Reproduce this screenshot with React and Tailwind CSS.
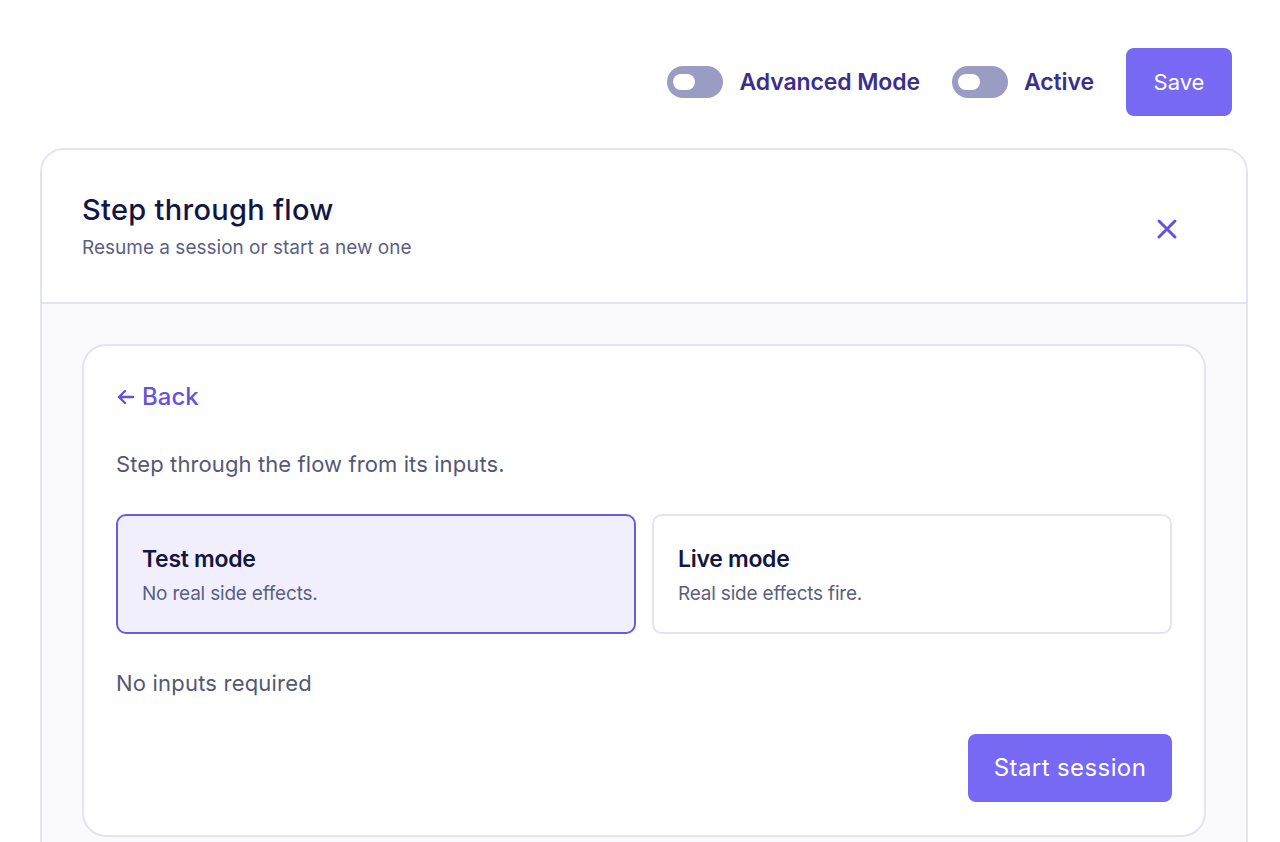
import React from "react";

function Toggle() {
  return (
    <div className="w-[56px] h-[32px] rounded-full bg-[#9a9cc4] flex items-center pl-[6px]">
      <div className="w-[22px] h-[16px] rounded-full bg-white" />
    </div>
  );
}

export default function App() {
  return (
    <div className="min-h-[842px] bg-white overflow-hidden" style={{ fontFamily: "Inter, 'Noto Sans', sans-serif" }}>
      <div className="flex justify-end items-center pt-[48px] pr-[48px] gap-[32px]">
        <div className="flex items-center gap-[16px]">
          <Toggle />
          <span className="text-[23px] font-semibold text-[#3a2f8c] tracking-[-0.1px]">Advanced Mode</span>
        </div>
        <div className="flex items-center gap-[16px]">
          <Toggle />
          <span className="text-[23px] font-semibold text-[#3a2f8c] tracking-[-0.1px]">Active</span>
        </div>
        <button className="w-[106px] h-[68px] rounded-[8px] bg-[#7769f3] text-white text-[22px]">Save</button>
      </div>
      <div className="ml-[40px] mr-[32px] mt-[32px] border-2 border-[#e3e4f3] rounded-t-[24px] bg-[#fafafd] h-[720px]">
        <div className="bg-white rounded-t-[22px] border-b-2 border-[#e3e4f3] h-[154px] flex items-center justify-between pl-[40px] pr-[68px]">
          <div className="pb-[2px]">
            <div className="text-[29px] font-medium text-[#131544] tracking-[0.3px]">Step through flow</div>
            <div className="text-[19px] text-[#5a5f85] mt-[2px]">Resume a session or start a new one</div>
          </div>
          <svg width="22" height="22" viewBox="0 0 22 22" className="mt-[6px]">
            <path d="M3 3 L19 19 M19 3 L3 19" stroke="#6650e0" strokeWidth="3" strokeLinecap="round" />
          </svg>
        </div>
        <div className="px-[40px] pt-[40px]">
          <div className="bg-white border-2 border-[#e3e4f3] rounded-[24px] px-[32px] pt-[33px] pb-[33px]">
            <div className="flex items-center gap-[6px] text-[#6553e0] text-[24px] font-medium">
              <svg width="20" height="20" viewBox="0 0 20 20">
                <path d="M17 10 H3 M9 4 L3 10 L9 16" stroke="#6553e0" strokeWidth="2.4" fill="none" strokeLinecap="round" strokeLinejoin="round" />
              </svg>
              <span>Back</span>
            </div>
            <div className="mt-[33px] text-[22px] text-[#535876] tracking-[0.1px]">Step through the flow from its inputs.</div>
            <div className="mt-[33px] grid grid-cols-2 gap-[16px]">
              <div className="h-[120px] rounded-[10px] border-2 border-[#6a5ae0] bg-[#f1effd] px-[24px] pt-[26px]">
                <div className="text-[23px] font-semibold text-[#141640] tracking-[-0.3px]">Test mode</div>
                <div className="text-[19px] text-[#5a5f80] mt-[3px] tracking-[-0.2px]">No real side effects.</div>
              </div>
              <div className="h-[120px] rounded-[10px] border-2 border-[#e3e4f3] bg-white px-[24px] pt-[26px]">
                <div className="text-[23px] font-semibold text-[#141640] tracking-[-0.3px]">Live mode</div>
                <div className="text-[19px] text-[#5a5f80] mt-[3px] tracking-[-0.2px]">Real side effects fire.</div>
              </div>
            </div>
            <div className="mt-[33px] text-[22px] text-[#535876] tracking-[0.2px]">No inputs required</div>
            <div className="flex justify-end mt-[34px]">
              <button className="w-[204px] h-[68px] rounded-[8px] bg-[#7769f3] text-white text-[24px] tracking-[0.4px]">Start session</button>
            </div>
          </div>
        </div>
      </div>
    </div>
  );
}
